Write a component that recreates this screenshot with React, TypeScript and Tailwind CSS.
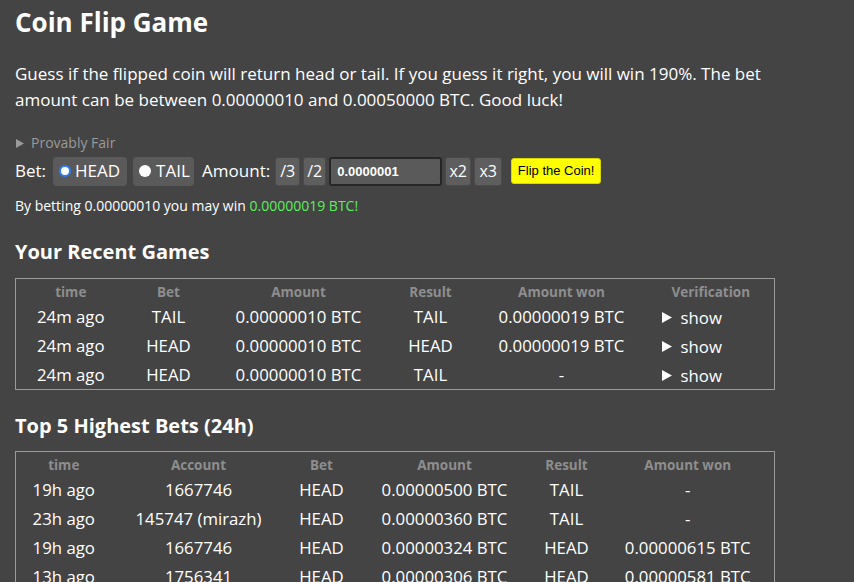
import React from 'react';

const FONT = { fontFamily: '"Open Sans", "Noto Sans", sans-serif' };
const ARIAL = { fontFamily: '"Liberation Sans", Arial, sans-serif' };

const recentGames = [
  { time: '24m ago', bet: 'TAIL', amount: '0.00000010 BTC', result: 'TAIL', won: '0.00000019 BTC' },
  { time: '24m ago', bet: 'HEAD', amount: '0.00000010 BTC', result: 'HEAD', won: '0.00000019 BTC' },
  { time: '24m ago', bet: 'HEAD', amount: '0.00000010 BTC', result: 'TAIL', won: '-' },
];

const topBets = [
  { time: '19h ago', account: '1667746', bet: 'HEAD', amount: '0.00000500 BTC', result: 'TAIL', won: '-' },
  { time: '23h ago', account: '145747 (mirazh)', bet: 'HEAD', amount: '0.00000360 BTC', result: 'TAIL', won: '-' },
  { time: '19h ago', account: '1667746', bet: 'HEAD', amount: '0.00000324 BTC', result: 'HEAD', won: '0.00000615 BTC' },
  { time: '13h ago', account: '1756341', bet: 'HEAD', amount: '0.00000306 BTC', result: 'HEAD', won: '0.00000581 BTC' },
  { time: '20h ago', account: '1667746', bet: 'HEAD', amount: '0.00000300 BTC', result: 'TAIL', won: '-' },
];

function SmallButton({ children, w }: { children: React.ReactNode; w: string }) {
  return (
    <button
      type="button"
      className={`${w} h-[29px] rounded-[3px] bg-[#5e5e5e] border border-[#4a4a4a] text-white text-[16px] leading-none`}
    >
      {children}
    </button>
  );
}

function Triangle({ className }: { className: string }) {
  return (
    <svg viewBox="0 0 10 11" className={className}>
      <path d="M0 0 L10 5.5 L0 11 Z" fill="currentColor" />
    </svg>
  );
}

export default function App() {
  return (
    <div className="min-h-screen bg-[#444444] text-white pl-[15px] pt-[4px] overflow-hidden" style={FONT}>
      <h1 className="text-[26px] font-bold leading-[36px]">Coin Flip Game</h1>

      <p className="mt-[21px] text-[17px] leading-[26px]">
        Guess if the flipped coin will return head or tail. If you guess it right, you will win 190%. The bet
        <br />
        amount can be between 0.00000010 and 0.00050000 BTC. Good luck!
      </p>

      <div className="mt-[20px] flex items-center gap-[7px] text-[14px] text-[#9a9a9a] leading-[20px]">
        <Triangle className="w-[8px] h-[9px] ml-[1px] shrink-0" />
        <span>Provably Fair</span>
      </div>

      <div className="flex items-center mt-[3px] h-[30px] text-[17px]">
        <span className="mr-[7px]">Bet:</span>
        <label className="flex items-center gap-[4px] w-[74px] h-[29px] px-[6px] rounded-[4px] bg-[#5a5a5a]">
          <span className="w-[12px] h-[12px] shrink-0 rounded-full bg-white border-[2.5px] border-[#2f7cf6]" />
          <span>HEAD</span>
        </label>
        <label className="ml-[6px] flex items-center gap-[5px] w-[61px] h-[29px] px-[6px] rounded-[4px] bg-[#5a5a5a]">
          <span className="w-[12px] h-[12px] shrink-0 rounded-full bg-white" />
          <span>TAIL</span>
        </label>
        <span className="ml-[8px] mr-[5px]">Amount:</span>
        <div className="flex items-center gap-[3px]">
          <SmallButton w="w-[25px]">/3</SmallButton>
          <SmallButton w="w-[23px]">/2</SmallButton>
          <input
            readOnly
            value="0.0000001"
            className="w-[113px] h-[29px] px-[6px] rounded-[3px] bg-[#5a5a5a] border-2 border-[#262626] text-white text-[13px] font-bold outline-none"
            style={ARIAL}
          />
          <SmallButton w="w-[26px]">x2</SmallButton>
          <SmallButton w="w-[28px]">x3</SmallButton>
        </div>
        <button
          type="button"
          className="ml-[9px] w-[90px] h-[26px] rounded-[3px] bg-[#ffff00] border border-[#d8d800] text-black text-[13px]"
          style={ARIAL}
        >
          Flip the Coin!
        </button>
      </div>

      <div className="mt-[10px] text-[14px] leading-[20px]">
        By betting 0.00000010 you may win <span className="text-[#5bf05b]">0.00000019 BTC!</span>
      </div>

      <h2 className="mt-[22px] text-[20px] font-bold leading-[28px]">Your Recent Games</h2>

      <table className="mt-[12px] w-[760px] table-fixed border border-[#9a9a9a] border-collapse text-[16.8px]">
        <colgroup>
          <col className="w-[110px]" />
          <col className="w-[86px]" />
          <col className="w-[174px]" />
          <col className="w-[90px]" />
          <col className="w-[172px]" />
          <col />
        </colgroup>
        <thead>
          <tr className="text-[13.5px] font-bold text-[#8e8e8e] h-[24px] align-bottom">
            <th>time</th>
            <th>Bet</th>
            <th>Amount</th>
            <th>Result</th>
            <th>Amount won</th>
            <th>Verification</th>
          </tr>
        </thead>
        <tbody>
          {recentGames.map((g, i) => (
            <tr key={i} className="h-[29px] text-center">
              <td>{g.time}</td>
              <td>{g.bet}</td>
              <td>{g.amount}</td>
              <td>{g.result}</td>
              <td>{g.won}</td>
              <td className="text-left pl-[14px]">
                <span className="inline-flex items-center gap-[9px]">
                  <Triangle className="w-[10px] h-[11px] shrink-0" />
                  <span>show</span>
                </span>
              </td>
            </tr>
          ))}
        </tbody>
      </table>

      <h2 className="mt-[22px] text-[20px] font-bold leading-[28px]">Top 5 Highest Bets (24h)</h2>

      <table className="mt-[11px] w-[760px] table-fixed border border-[#9a9a9a] border-collapse text-[16.8px]">
        <colgroup>
          <col className="w-[96px]" />
          <col className="w-[174px]" />
          <col className="w-[72px]" />
          <col className="w-[174px]" />
          <col className="w-[70px]" />
          <col />
        </colgroup>
        <thead>
          <tr className="text-[13.5px] font-bold text-[#8e8e8e] h-[24px] align-bottom">
            <th>time</th>
            <th>Account</th>
            <th>Bet</th>
            <th>Amount</th>
            <th>Result</th>
            <th>Amount won</th>
          </tr>
        </thead>
        <tbody>
          {topBets.map((b, i) => (
            <tr key={i} className="h-[29px] text-center">
              <td>{b.time}</td>
              <td>{b.account}</td>
              <td>{b.bet}</td>
              <td>{b.amount}</td>
              <td>{b.result}</td>
              <td>{b.won}</td>
            </tr>
          ))}
        </tbody>
      </table>
    </div>
  );
}
